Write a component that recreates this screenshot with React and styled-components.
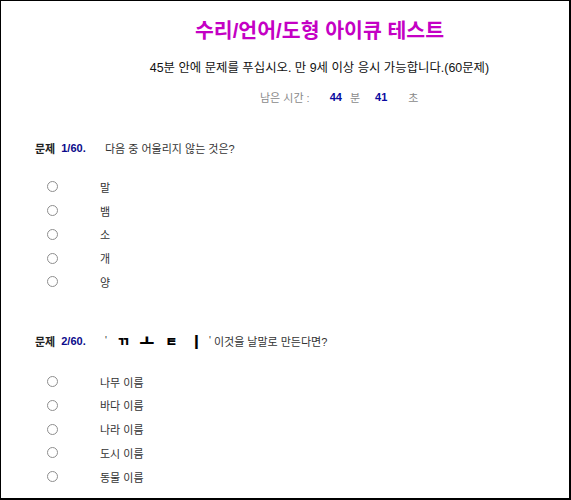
import React from "react";
import styled, { createGlobalStyle } from "styled-components";

const GlobalStyle = createGlobalStyle`
  html, body {
    margin: 0;
    padding: 0;
    background: #fff;
  }
  body {
    font-family: "Liberation Sans", "Noto Sans CJK KR", sans-serif;
    color: #222;
  }
`;

const Frame = styled.div`
  width: 571px;
  height: 500px;
  box-sizing: border-box;
  border-style: solid;
  border-color: #000;
  border-width: 1px 2px 2px 1px;
  overflow: hidden;
  background: #fff;
`;

const Header = styled.header`
  padding: 15px 0 0 69px;
  text-align: center;
`;

const Title = styled.h1`
  margin: 0;
  font-size: 20.5px;
  line-height: 30px;
  font-weight: bold;
  color: #c400c4;
`;

const Subtitle = styled.p`
  margin: 12px 0 0;
  font-size: 12.4px;
  line-height: 20px;
  color: #111;
`;

const Timer = styled.div`
  display: flex;
  align-items: center;
  margin-top: 9px;
  padding-left: 190px;
  height: 20px;
  font-size: 11px;
  text-align: left;
`;

const TimerItem = styled.span`
  margin-left: ${(p) => p.$ml || 0}px;
  color: ${(p) => (p.$value ? "#0a0aa0" : "#8a8a8a")};
  font-weight: ${(p) => (p.$value ? "bold" : "normal")};
`;

const Questions = styled.main`
  padding-left: 34px;
`;

const Question = styled.section`
  margin-top: ${(p) => p.$mt}px;
`;

const QuestionHead = styled.div`
  display: flex;
  align-items: center;
  height: 20px;
  font-size: 11px;
`;

const Prefix = styled.div`
  width: 70px;
  flex: none;
  display: flex;
  align-items: center;
  gap: 6px;
  font-weight: bold;
  color: #222;
`;

const Number = styled.span`
  color: #0a0a8a;
`;

const QuestionText = styled.div`
  display: flex;
  align-items: center;
  color: #333;
`;

const Quote = styled.span`
  margin-left: ${(p) => p.$ml || 0}px;
  font-size: 10px;
`;

const Jamo = styled.span`
  display: inline-block;
  width: 16px;
  margin-left: ${(p) => p.$ml}px;
  text-align: center;
  font-size: ${(p) => p.$size || 13}px;
  font-weight: 900;
  color: #000;
  line-height: 20px;
  padding-top: 2px;
`;

const Options = styled.ul`
  list-style: none;
  margin: ${(p) => p.$mt}px 0 0;
  padding: 0 0 0 12px;
`;

const Option = styled.li`
  display: flex;
  align-items: center;
  height: 23.75px;
`;

const Radio = styled.input.attrs({ type: "radio" })`
  appearance: none;
  margin: 0;
  width: 11px;
  height: 11px;
  flex: none;
  box-sizing: border-box;
  border: 1px solid #8e8e8e;
  border-radius: 50%;
  background: #fff;
`;

const OptionLabel = styled.label`
  margin-left: 42px;
  font-size: 11px;
  color: #333;
`;

const questions = [
  {
    no: "1/60.",
    text: "다음 중 어울리지 않는 것은?",
    options: ["말", "뱀", "소", "개", "양"],
  },
  {
    no: "2/60.",
    options: ["나무 이름", "바다 이름", "나라 이름", "도시 이름", "동물 이름"],
  },
];

function OptionList({ name, items, mt }) {
  return (
    <Options $mt={mt}>
      {items.map((item, i) => (
        <Option key={item}>
          <Radio name={name} id={`${name}-${i}`} />
          <OptionLabel htmlFor={`${name}-${i}`}>{item}</OptionLabel>
        </Option>
      ))}
    </Options>
  );
}

export default function App() {
  const [q1, q2] = questions;

  return (
    <>
      <GlobalStyle />
      <Frame>
        <Header>
          <Title>수리/언어/도형 아이큐 테스트</Title>
          <Subtitle>45분 안에 문제를 푸십시오. 만 9세 이상 응시 가능합니다.(60문제)</Subtitle>
          <Timer>
            <TimerItem>남은 시간 :</TimerItem>
            <TimerItem $value $ml={20}>44</TimerItem>
            <TimerItem $ml={8}>분</TimerItem>
            <TimerItem $value $ml={15}>41</TimerItem>
            <TimerItem $ml={21}>초</TimerItem>
          </Timer>
        </Header>

        <Questions>
          <Question $mt={31}>
            <QuestionHead>
              <Prefix>
                문제 <Number>{q1.no}</Number>
              </Prefix>
              <QuestionText>{q1.text}</QuestionText>
            </QuestionHead>
            <OptionList name="q1" items={q1.options} mt={17} />
          </Question>

          <Question $mt={37}>
            <QuestionHead>
              <Prefix>
                문제 <Number>{q2.no}</Number>
              </Prefix>
              <QuestionText>
                <Quote>'</Quote>
                <Jamo $ml={8.5}>ㄲ</Jamo>
                <Jamo $ml={7.5} $size={16}>ㅗ</Jamo>
                <Jamo $ml={8.5}>ㅌ</Jamo>
                <Jamo $ml={9} $size={15}>ㅣ</Jamo>
                <Quote $ml={4.5}>'</Quote>
                <span>&nbsp;이것을 날말로 만든다면?</span>
              </QuestionText>
            </QuestionHead>
            <OptionList name="q2" items={q2.options} mt={19} />
          </Question>
        </Questions>
      </Frame>
    </>
  );
}
